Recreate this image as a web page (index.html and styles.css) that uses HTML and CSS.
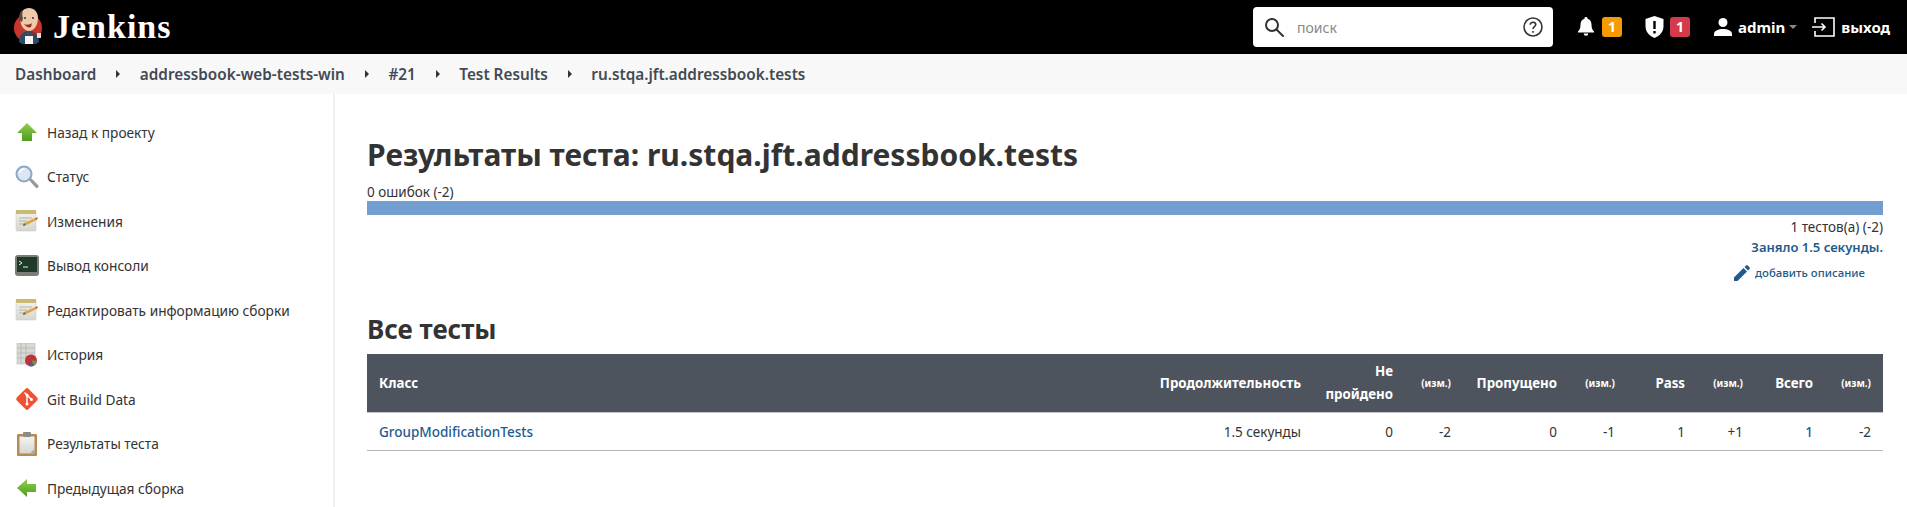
FILE: index.html
```html
<!DOCTYPE html>
<html lang="ru">
<head>
    <meta charset="UTF-8">
    <title>Test Results - Jenkins</title>
    <link rel="stylesheet" href="styles.css">
</head>
<body>
    <svg class="defs" width="0" height="0">
        <defs>
            <linearGradient id="green" x1="0" y1="0" x2="0" y2="1">
                <stop offset="0" stop-color="#8fd14a"/>
                <stop offset="1" stop-color="#4f9a22"/>
            </linearGradient>
            <linearGradient id="paper" x1="0" y1="0" x2="0" y2="1">
                <stop offset="0" stop-color="#f4f4ee"/>
                <stop offset="1" stop-color="#d6d6d0"/>
            </linearGradient>
            <symbol id="notepad" viewBox="0 0 24 24">
                <rect x="1" y="2" width="20" height="20" rx="1" fill="url(#paper)" stroke="#cfcfc8" stroke-width=".6"/>
                <rect x="1" y="1" width="20" height="4" fill="#c9b974"/>
                <path d="M4 9h13M4 12h8M4 15h6" stroke="#b5b5ae" stroke-width="1"/>
                <path d="M8 17l1-3 11-5 3-.5-1.500 2.500-11 5.500z" fill="#e0a34a"/>
                <path d="M20 9l3-.5-1.500 2.500z" fill="#d0503c"/>
                <path d="M8 17l1-3 1.500 2z" fill="#555"/>
            </symbol>
        </defs>
    </svg>

    <header class="topbar">
        <a class="logo" href="#">
            <svg class="logo-img" width="30" height="38" viewBox="0 0 30 38">
                <circle cx="15" cy="20" r="14" fill="#c8352b"/>
                <path d="M6 34c0-7 4-11 10-11s10 4 10 11l-3 2H9z" fill="#2f4a63"/>
                <path d="M7 10c0-6 4-10 9-10s9 4 9 10c0 7-4 13-9 13s-9-6-9-13z" fill="#f0c9a8"/>
                <path d="M7 13C5 8 7 3 10 2c-1 3-1 6 0 8l-1 4z" fill="#5b4c40"/>
                <path d="M11 16c2 1 6 1 8-1l-1 4c-2 1-5 0-7-3z" fill="#8c2f28"/>
                <circle cx="12" cy="10" r="1" fill="#333"/>
                <circle cx="20" cy="10" r="1" fill="#333"/>
                <path d="M14 24l3 2 3-2v3l-3-1-3 1z" fill="#b0282a"/>
                <path d="M12 28h8v8h-8z" fill="#f4f4f4"/>
                <path d="M24 25h4v5h-4z" fill="#e9dfd2"/>
            </svg>
            <span class="logo-text">Jenkins</span>
        </a>
        <div class="search">
            <svg width="20" height="20" viewBox="0 0 20 20" fill="none" stroke="#333" stroke-width="2">
                <circle cx="8" cy="8" r="6"/>
                <path d="M12.500 12.500L19 19" stroke-linecap="round"/>
            </svg>
            <span class="search-text">поиск</span>
            <svg class="help" width="20" height="20" viewBox="0 0 20 20" fill="none" stroke="#333" stroke-width="1.600">
                <circle cx="10" cy="10" r="9"/>
                <path d="M7.300 7.800c0-1.600 1.200-2.600 2.700-2.600s2.700 1 2.700 2.400c0 2-2.700 2.200-2.700 4.400"/>
                <path d="M10 14v1.800"/>
            </svg>
        </div>
        <div class="top-item bell-item">
            <svg width="18" height="20" viewBox="0 0 18 20" fill="#fff">
                <path d="M9 0a1.500 1.500 0 0 1 1.500 1.700C13 2.400 14.500 4.600 14.500 7.500c0 3.500.8 5.300 2.500 7v1H1v-1c1.700-1.700 2.500-3.500 2.500-7 0-2.900 1.500-5.100 4-5.800A1.500 1.500 0 0 1 9 0zM6.700 16.500h4.600a2.300 2.300 0 0 1-4.600 0z"/>
            </svg>
            <span class="badge badge-orange">1</span>
        </div>
        <div class="top-item shield-item">
            <svg width="19" height="22" viewBox="0 0 19 22">
                <path d="M9.500 0l9 3v7c0 5.500-3.500 9.800-9 12-5.500-2.200-9-6.500-9-12V3z" fill="#fff"/>
                <path d="M8.300 5h2.400v8H8.300zM8.300 15h2.400v2.400H8.300z" fill="#000"/>
            </svg>
            <span class="badge badge-red">1</span>
        </div>
        <div class="top-item user-item">
            <svg width="18" height="18" viewBox="0 0 18 18" fill="#fff">
                <circle cx="9" cy="4.500" r="4.500"/>
                <path d="M0 18v-2c0-3.300 4.500-5 9-5s9 1.700 9 5v2z"/>
            </svg>
            <span class="top-link">admin</span>
            <span class="caret"></span>
        </div>
        <div class="top-item logout-item">
            <svg width="23" height="20" viewBox="0 0 23 20" fill="none" stroke="#fff" stroke-width="1.600">
                <path d="M3 6V1h19v18H3v-5"/>
                <path d="M0 10h13M9.500 6.500L13 10l-3.500 3.500"/>
            </svg>
            <span class="top-link">выход</span>
        </div>
    </header>

    <nav class="breadcrumbs">
        <a href="#">Dashboard</a><span class="crumb-arrow"></span>
        <a href="#">addressbook-web-tests-win</a><span class="crumb-arrow"></span>
        <a href="#">#21</a><span class="crumb-arrow"></span>
        <a href="#">Test Results</a><span class="crumb-arrow"></span>
        <a href="#">ru.stqa.jft.addressbook.tests</a>
    </nav>

    <div class="page">
        <aside class="sidebar">
            <a class="task" href="#">
                <svg width="24" height="24" viewBox="0 0 24 24"><path d="M12 3l10 10h-5v8H7v-8H2z" fill="url(#green)"/></svg>
                Назад к проекту
            </a>
            <a class="task" href="#">
                <svg width="24" height="24" viewBox="0 0 24 24">
                    <path d="M14 15l2-2 7 7a1.500 1.500 0 0 1-2.500 2.500z" fill="#9a9a92"/>
                    <circle cx="9" cy="9" r="7.500" fill="#dbe7f5" stroke="#8fa6c4" stroke-width="2"/>
                    <path d="M4.500 8a5 5 0 0 1 5-4" stroke="#fff" stroke-width="1.500" fill="none"/>
                </svg>
                Статус
            </a>
            <a class="task" href="#">
                <svg width="24" height="24"><use href="#notepad"/></svg>
                Изменения
            </a>
            <a class="task" href="#">
                <svg width="24" height="24" viewBox="0 0 24 24">
                    <rect x="0" y="1" width="24" height="21" rx="3" fill="#7a7d76"/>
                    <rect x="2" y="3" width="20" height="15" fill="#1f3a28"/>
                    <path d="M4 7l3 2-3 2" stroke="#e8f0e8" fill="none"/>
                    <path d="M8 13h5" stroke="#e8f0e8"/>
                </svg>
                Вывод консоли
            </a>
            <a class="task" href="#">
                <svg width="24" height="24"><use href="#notepad"/></svg>
                Редактировать информацию сборки
            </a>
            <a class="task" href="#">
                <svg width="24" height="24" viewBox="0 0 24 24">
                    <rect x="2" y="0" width="18" height="21" fill="#d8d8d4" stroke="#b9b9b4" stroke-width=".6"/>
                    <path d="M6 0v21M2 5h18M2 10h18M2 15h18M11 0v21" stroke="#b5b5b0" stroke-width=".8"/>
                    <circle cx="16" cy="17.500" r="6" fill="#c2303a"/>
                    <path d="M16 17.500l6 0a6 6 0 0 1-3 5z" fill="#6a9a3a"/>
                    <path d="M16 17.500l3 5a6 6 0 0 1-5 .5z" fill="#3f5fa8"/>
                </svg>
                История
            </a>
            <a class="task" href="#">
                <svg width="24" height="24" viewBox="0 0 24 24">
                    <rect x="3.800" y="3.800" width="16.400" height="16.400" rx="2" fill="#ee5233" transform="rotate(45 12 12)"/>
                    <path d="M9.500 5.500l7 7M12 8v9" stroke="#fff" stroke-width="1.400"/>
                    <circle cx="12" cy="8" r="1.500" fill="#fff"/>
                    <circle cx="12" cy="17" r="1.500" fill="#fff"/>
                    <circle cx="16.500" cy="12.500" r="1.500" fill="#fff"/>
                </svg>
                Git Build Data
            </a>
            <a class="task" href="#">
                <svg width="24" height="24" viewBox="0 0 24 24">
                    <rect x="2" y="2" width="20" height="22" rx="1" fill="#b58a55"/>
                    <rect x="4.500" y="4.500" width="15" height="17" fill="url(#paper)"/>
                    <rect x="8" y="0" width="8" height="5" rx="1" fill="#8c8c86"/>
                    <path d="M15 21.500l4.500-4.500v4.500z" fill="#a9a9a4"/>
                </svg>
                Результаты теста
            </a>
            <a class="task" href="#">
                <svg width="24" height="24" viewBox="0 0 24 24"><path d="M2 12L12 3v5h9v8h-9v5z" fill="url(#green)"/></svg>
                Предыдущая сборка
            </a>
        </aside>

        <main class="content">
            <h1>Результаты теста: ru.stqa.jft.addressbook.tests</h1>
            <div class="fail-count">0 ошибок (-2)</div>
            <div class="result-bar"></div>
            <div class="test-count">1 тестов(а) (-2)</div>
            <div class="duration"><a href="#">Заняло 1.5 секунды.</a></div>
            <div class="description">
                <a href="#">
                    <svg width="16" height="16" viewBox="0 0 16 16" fill="#1d5b8e">
                        <path d="M0 16v-3.500L9.500 3 13 6.500 3.500 16zM10.500 2l1.500-1.500a1.200 1.200 0 0 1 1.700 0l1.800 1.800a1.200 1.200 0 0 1 0 1.700L14 5.500z"/>
                    </svg>
                    добавить описание
                </a>
            </div>

            <h2>Все тесты</h2>
            <table class="results">
                <colgroup>
                    <col>
                    <col class="col-time">
                    <col class="col-fail">
                    <col class="col-diff">
                    <col class="col-skip">
                    <col class="col-diff">
                    <col class="col-num">
                    <col class="col-diff">
                    <col class="col-num">
                    <col class="col-diff">
                </colgroup>
                <thead>
                    <tr>
                        <th class="left">Класс</th>
                        <th>Продолжительность</th>
                        <th>Не пройдено</th>
                        <th class="small">(изм.)</th>
                        <th>Пропущено</th>
                        <th class="small">(изм.)</th>
                        <th>Pass</th>
                        <th class="small">(изм.)</th>
                        <th>Всего</th>
                        <th class="small">(изм.)</th>
                    </tr>
                </thead>
                <tbody>
                    <tr>
                        <td class="left"><a href="#">GroupModificationTests</a></td>
                        <td>1.5 секунды</td>
                        <td>0</td>
                        <td>-2</td>
                        <td>0</td>
                        <td>-1</td>
                        <td>1</td>
                        <td>+1</td>
                        <td><a href="#">1</a></td>
                        <td>-2</td>
                    </tr>
                </tbody>
            </table>
        </main>
    </div>
</body>
</html>
```

FILE: styles.css
```css
html, body {
    height: 100%;
}
body {
    margin: 0;
    font-family: "Noto Sans", "Open Sans", sans-serif;
    font-size: 13.500px;
    color: #333;
    background-color: #fff;
    overflow: hidden;
    display: flex;
    flex-direction: column;
}
a {
    color: inherit;
    text-decoration: none;
}
.defs {
    position: absolute;
}

/* top bar */
.topbar {
    height: 54px;
    flex: none;
    background-color: #000;
    color: #fff;
    display: flex;
    align-items: center;
}
.logo {
    display: flex;
    align-items: center;
    margin-left: 13px;
    width: 1240px;
}
.logo-text {
    font-family: "Liberation Serif", serif;
    font-size: 34px;
    font-weight: bold;
    letter-spacing: 1px;
    margin-left: 10px;
}
.search {
    width: 300px;
    height: 40px;
    box-sizing: border-box;
    background-color: #fff;
    border-radius: 4px;
    display: flex;
    align-items: center;
    padding: 0 10px 0 11px;
}
.search-text {
    color: #888;
    font-size: 14px;
    margin-left: 13px;
}
.help {
    margin-left: auto;
}
.top-item {
    display: flex;
    align-items: center;
}
.bell-item {
    margin-left: 24px;
    gap: 7px;
}
.shield-item {
    margin-left: 23px;
    gap: 6px;
}
.user-item {
    margin-left: 24px;
    gap: 6px;
}
.logout-item {
    margin-left: 15px;
    gap: 6px;
}
.badge {
    width: 20px;
    height: 20px;
    border-radius: 3px;
    color: #fff;
    font-weight: bold;
    font-size: 14px;
    line-height: 20px;
    text-align: center;
}
.badge-orange {
    background-color: #f59a00;
}
.badge-red {
    background-color: #d33a4a;
}
.top-link {
    font-weight: bold;
    font-size: 15px;
}
.caret {
    width: 0;
    height: 0;
    margin-left: -2px;
    border-left: 4px solid transparent;
    border-right: 4px solid transparent;
    border-top: 4px solid #888;
}

/* breadcrumbs */
.breadcrumbs {
    height: 40px;
    flex: none;
    background-color: #f8f8f8;
    display: flex;
    align-items: center;
    padding-left: 15px;
    color: #434a54;
    font-size: 15.300px;
    font-weight: 600;
}
.crumb-arrow {
    width: 0;
    height: 0;
    margin: 0 19.500px 0 20px;
    border-top: 4px solid transparent;
    border-bottom: 4px solid transparent;
    border-left: 4px solid #333;
}

/* side panel */
.page {
    flex: 1;
    display: flex;
    min-height: 0;
}
.sidebar {
    width: 333px;
    flex: none;
    border-right: 2px solid #f0f0f0;
    padding-top: 16px;
    overflow: hidden;
}
.task {
    height: 44.500px;
    display: flex;
    align-items: center;
    gap: 8px;
    padding-left: 15px;
    font-size: 13.700px;
    color: #333;
}
.task svg {
    flex: none;
}

/* main */
.content {
    flex: 1;
    min-width: 0;
    padding: 40px 24px 0 32px;
}
h1 {
    font-size: 30px;
    line-height: 42px;
    font-weight: 700;
    margin: 0;
}
.fail-count {
    margin-top: 7px;
    line-height: 18px;
}
.result-bar {
    height: 14px;
    background-color: #729fcf;
}
.test-count {
    text-align: right;
    margin-top: 3px;
    line-height: 18px;
}
.duration {
    text-align: right;
    margin-top: 2px;
    line-height: 18px;
    font-size: 13px;
    color: #1d5b8e;
    font-weight: 600;
}
.description {
    text-align: right;
    margin-top: 8px;
    padding-right: 18px;
    line-height: 18px;
    font-size: 11.400px;
    color: #1d5b8e;
    font-weight: 500;
}
.description a {
    display: inline-flex;
    align-items: center;
    gap: 5px;
}
h2 {
    font-size: 26px;
    line-height: 34px;
    font-weight: 700;
    margin: 26px 0 8px;
}
.results {
    width: 100%;
    border-collapse: collapse;
    table-layout: fixed;
}
.col-time {
    width: 167px;
}
.col-fail {
    width: 92px;
}
.col-diff {
    width: 58px;
}
.col-skip {
    width: 106px;
}
.col-num {
    width: 70px;
}
.results th {
    background-color: #4d545d;
    color: #fff;
    font-size: 13.300px;
    line-height: 23px;
    padding: 0 12px;
    text-align: right;
    font-weight: bold;
    height: 58px;
    border-bottom: 1px solid #c0c3c7;
}
.results th.left {
    text-align: left;
}
.results th.small {
    font-size: 10px;
}
.results td {
    padding: 0 12px;
    height: 37px;
    text-align: right;
    border-bottom: 1px solid #b5b8bb;
}
.results td.left {
    text-align: left;
}
.results td a {
    color: #1d5b8e;
    font-weight: 500;
}
```
